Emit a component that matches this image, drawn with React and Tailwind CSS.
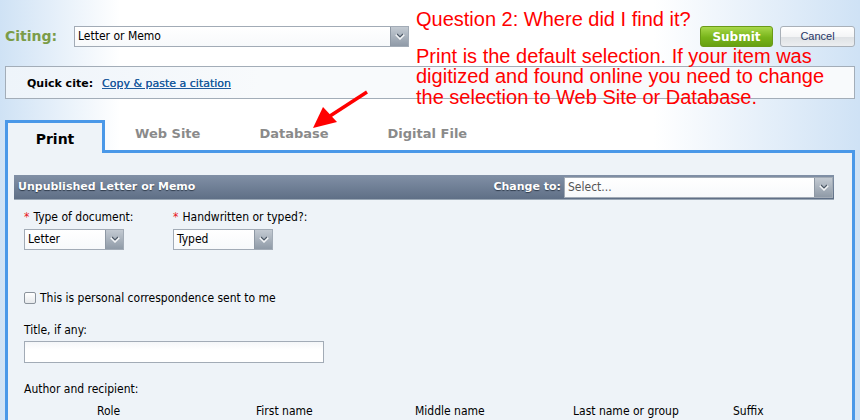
import React from "react";

const body = { fontFamily: '"DejaVu Sans Condensed", "DejaVu Sans", Verdana, sans-serif' };
const bold = { fontFamily: '"DejaVu Sans", Verdana, sans-serif' };
const arial = { fontFamily: '"Liberation Sans", Arial, sans-serif' };

const Arrow = () => (
  <span className="flex h-full w-[18px] items-center justify-center border-l border-[#8e98a4] bg-[linear-gradient(#c3cad2,#8f9aa7)]">
    <svg width="10" height="7" viewBox="0 0 10 7">
      <path d="M1 1.5 L5 5.5 L9 1.5" fill="none" stroke="#f4f6f8" strokeWidth="2.2" />
      <path d="M2 1 L5 4 L8 1" fill="none" stroke="#4d5866" strokeWidth="1.2" />
    </svg>
  </span>
);

const Select = ({ value, width, muted }) => (
  <div
    className={`flex h-[21px] items-stretch border border-[#a2abb6] bg-[linear-gradient(#ffffff,#f7f9fb)] ${width}`}
  >
    <span className={`flex-1 truncate pl-[3px] text-[12px] leading-[19px] ${muted ? "text-[#555]" : "text-black"}`}>
      {value}
    </span>
    <Arrow />
  </div>
);

const Req = () => <span className="mr-[4px] text-[#e8141c]">*</span>;

export default function App() {
  return (
    <div
      className="relative h-[420px] w-[860px] overflow-hidden bg-[linear-gradient(to_right,#cfe2f5,#ffffff_14%,#ffffff_76%,#cfe2f5)]"
      style={body}
    >
      {/* top row */}
      <div className="flex h-[47px] items-end">
        <div className="flex h-[21px] w-full items-center">
          <span className="ml-[5px] w-[69px] text-[14px] font-bold text-[#7b9c48]" style={bold}>
            Citing:
          </span>
          <Select value="Letter or Memo" width="w-[335px]" />
          <div className="ml-[291px] flex gap-[7px]">
            <button
              className="h-[21px] w-[73px] rounded-[3px] border border-[#6a9a18] bg-[linear-gradient(#a8d84a,#78b41a_55%,#67a012)] text-[12px] font-bold text-white"
              style={bold}
            >
              Submit
            </button>
            <button
              className="h-[21px] w-[75px] rounded-[3px] border border-[#a9b0b8] bg-[linear-gradient(#ffffff,#f4f5f6_50%,#dfe2e5_55%,#eceef0)] text-[11px] text-[#1f3566]"
              style={arial}
            >
              Cancel
            </button>
          </div>
        </div>
      </div>

      {/* quick cite */}
      <div className="ml-[5px] mt-[19px] flex h-[33px] w-[850px] items-center border border-[#a3adb8] bg-[linear-gradient(to_right,#eef4fa,#f8fafc_30%,#f8fafc)] pl-[21px] pt-[4px]">
        <span className="text-[11px] font-bold text-black" style={bold}>
          Quick cite:
        </span>
        <a className="ml-[9px] text-[11px] text-[#1c5a9c] underline [text-shadow:0_0_0.4px_#1c5a9c]" style={bold}>
          Copy &amp; paste a citation
        </a>
      </div>

      {/* tabs */}
      <div className="ml-[5px] mt-[21px] flex w-[850px] items-end">
        <div
          className="z-10 flex h-[33px] w-[100px] items-center justify-center border-x-[3px] border-t-[3px] border-[#4a98e8] bg-[#eef3f8] pt-[3px] text-[14px] font-bold text-black"
          style={bold}
        >
          Print
        </div>
        <div className="flex h-[33px] flex-1 border-b-[3px] border-[#4a98e8] pl-[30px] pt-[4px] text-[13px] font-bold text-[#8a8a8a]" style={bold}>
          <span>Web Site</span>
          <span className="ml-[59px]">Database</span>
          <span className="ml-[59px]">Digital File</span>
        </div>
      </div>

      {/* panel */}
      <div className="-mt-[2px] ml-[5px] h-[300px] w-[850px] border-x-[3px] border-[#4a98e8] bg-[#eef3f8] pl-[6px] pt-[24px]">
        <div className="flex h-[25px] w-[820px] items-center border-b border-[#9aa7b5] bg-[linear-gradient(#8190a6,#5f6f86)] pl-[4px]">
          <span className="text-[11px] font-bold text-white [text-shadow:0_1px_1px_#2e3a4a]" style={bold}>
            Unpublished Letter or Memo
          </span>
          <span className="ml-auto mr-[3px] text-[11px] font-bold text-white [text-shadow:0_1px_1px_#2e3a4a]" style={bold}>
            Change to:
          </span>
          <div className="mr-[1px]">
            <Select value="Select..." width="w-[269px] h-[19px]" muted />
          </div>
        </div>

        <div className="pl-[10px] text-[12px] text-black">
          <div className="mt-[9px] flex">
            <div className="w-[149px]">
              <div className="leading-[16px]">
                <Req />Type of document:
              </div>
              <div className="mt-[4px]">
                <Select value="Letter" width="w-[100px]" />
              </div>
            </div>
            <div>
              <div className="leading-[16px]">
                <Req />Handwritten or typed?:
              </div>
              <div className="mt-[4px]">
                <Select value="Typed" width="w-[100px]" />
              </div>
            </div>
          </div>

          <label className="mt-[40px] flex items-center">
            <span className="h-[12px] w-[12px] rounded-[2px] border border-[#8b939c] bg-[linear-gradient(#ffffff,#e6e9ec)]" />
            <span className="ml-[4px] leading-[16px]">This is personal correspondence sent to me</span>
          </label>

          <div className="mt-[16px] leading-[16px]">Title, if any:</div>
          <div className="mt-[3px] h-[22px] w-[300px] border border-[#a2abb6] bg-[linear-gradient(#f4f6f8,#ffffff_40%)]" />

          <div className="mt-[18px] leading-[16px]">Author and recipient:</div>
          <div className="relative mt-[6px] h-[16px] leading-[16px]">
            <span className="absolute left-[73px]">Role</span>
            <span className="absolute left-[232px]">First name</span>
            <span className="absolute left-[391px]">Middle name</span>
            <span className="absolute left-[549px]">Last name or group</span>
            <span className="absolute left-[709px]">Suffix</span>
          </div>
        </div>
      </div>

      {/* annotation */}
      <div className="absolute left-[416px] top-[9px] text-[20px] leading-[20.5px] text-[#ff0000]" style={arial}>
        <div>Question 2: Where did I find it?</div>
        <div className="mt-[16px]">
          Print is the default selection. If your item was
          <br />
          digitized and found online you need to change
          <br />
          the selection to Web Site or Database.
        </div>
      </div>
      <svg className="absolute left-[300px] top-[85px]" width="80" height="50" viewBox="0 0 80 50">
        <line x1="67" y1="7" x2="30" y2="31" stroke="#ff0000" strokeWidth="3.5" />
        <polygon points="13,43 23,22 37,37" fill="#ff0000" />
      </svg>
    </div>
  );
}
